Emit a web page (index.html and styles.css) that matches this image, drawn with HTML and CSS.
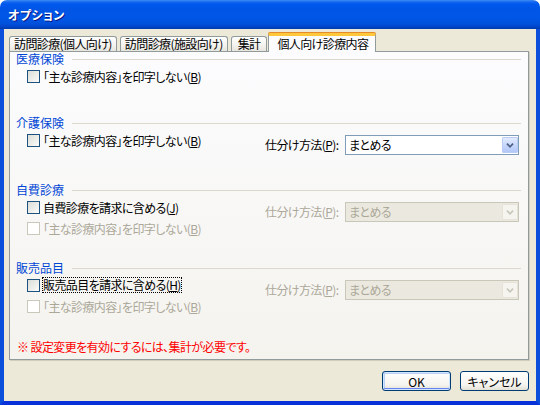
FILE: index.html
```html
<!DOCTYPE html>
<html lang="ja">
<head>
<meta charset="utf-8">
<title>オプション</title>
<link rel="stylesheet" href="styles.css">
</head>
<body>
<div class="window">
  <div class="titlebar"><span class="title">オプション</span></div>
  <div class="client">
    <div class="tabs">
      <div class="tab">訪問診療(個人向け)</div>
      <div class="tab">訪問診療(施設向け)</div>
      <div class="tab short">集計</div>
      <div class="tab active">個人向け診療内容</div>
    </div>
    <div class="panel">
      <section class="group g1">
        <div class="group-head"><span>医療保険</span></div>
        <div class="group-body">
          <div class="checks">
            <label class="check"><span class="box"></span><span>「主な診療内容」を印字しない(<u>B</u>)</span></label>
          </div>
        </div>
      </section>
      <section class="group g2">
        <div class="group-head"><span>介護保険</span></div>
        <div class="group-body">
          <div class="checks">
            <label class="check"><span class="box"></span><span>「主な診療内容」を印字しない(<u>B</u>)</span></label>
          </div>
          <span class="field-label">仕分け方法(<u>P</u>):</span>
          <div class="combo"><span class="combo-text">まとめる</span><span class="combo-btn"><svg width="16" height="16" viewBox="0 0 16 16"><path d="M4.5 6.5 L8 10 L11.5 6.5" fill="none" stroke="currentColor" stroke-width="2"/></svg></span></div>
        </div>
      </section>
      <section class="group g3">
        <div class="group-head"><span>自費診療</span></div>
        <div class="group-body">
          <div class="checks">
            <label class="check"><span class="box"></span><span>自費診療を請求に含める(<u>J</u>)</span></label>
            <label class="check disabled"><span class="box"></span><span>「主な診療内容」を印字しない(<u>B</u>)</span></label>
          </div>
          <span class="field-label disabled">仕分け方法(<u>P</u>):</span>
          <div class="combo disabled"><span class="combo-text">まとめる</span><span class="combo-btn"><svg width="16" height="16" viewBox="0 0 16 16"><path d="M4.5 6.5 L8 10 L11.5 6.5" fill="none" stroke="currentColor" stroke-width="2"/></svg></span></div>
        </div>
      </section>
      <section class="group g4">
        <div class="group-head"><span>販売品目</span></div>
        <div class="group-body">
          <div class="checks">
            <label class="check"><span class="box"></span><span class="focus">販売品目を請求に含める(<u>H</u>)</span></label>
            <label class="check disabled"><span class="box"></span><span>「主な診療内容」を印字しない(<u>B</u>)</span></label>
          </div>
          <span class="field-label disabled">仕分け方法(<u>P</u>):</span>
          <div class="combo disabled"><span class="combo-text">まとめる</span><span class="combo-btn"><svg width="16" height="16" viewBox="0 0 16 16"><path d="M4.5 6.5 L8 10 L11.5 6.5" fill="none" stroke="currentColor" stroke-width="2"/></svg></span></div>
        </div>
      </section>
      <p class="note">※ 設定変更を有効にするには、集計が必要です。</p>
    </div>
    <div class="buttons">
      <button class="btn default">OK</button>
      <button class="btn">キャンセル</button>
    </div>
  </div>
</div>
</body>
</html>
```

FILE: styles.css
```css
html, body {
  margin: 0;
  padding: 0;
}
body {
  width: 540px;
  height: 405px;
  overflow: hidden;
  background: #ffffff;
  font-family: "Noto Sans CJK JP", "Noto Sans", sans-serif;
  font-size: 12px;
  font-feature-settings: "palt";
  letter-spacing: -0.6px;
  color: #000;
}
.window {
  width: 540px;
  height: 405px;
  display: flex;
  flex-direction: column;
}
.titlebar {
  height: 29px;
  flex: none;
  box-sizing: border-box;
  border-radius: 7px 7px 0 0;
  background: linear-gradient(#3f8cf3 0, #1568f0 2px, #0058ee 4px, #0055e5 9px, #0056e6 18px, #0050da 24px, #0044c8 27px, #003aa8 29px);
  display: flex;
  align-items: center;
  padding: 0 0 1px 8px;
}
.title {
  color: #fff;
  font-weight: bold;
  font-size: 12px;
  letter-spacing: 0.5px;
  text-shadow: 1px 1px 0 #0a1883;
}
.client {
  flex: 1;
  display: flex;
  flex-direction: column;
  background: #ece9d8;
  border: 4px solid #0b4edb;
  border-top: 0;
  border-bottom-color: #0831d9;
  padding: 4px 7px 0 5px;
  min-height: 0;
}
.tabs {
  height: 18px;
  flex: none;
  display: flex;
  align-items: flex-end;
  gap: 3px;
}
.tab {
  height: 15px;
  box-sizing: border-box;
  padding: 0 4px;
  line-height: 13px;
  border: 1px solid #919b9c;
  border-bottom: 0;
  border-radius: 3px 3px 0 0;
  background: linear-gradient(#ffffff, #f3f2ee 60%, #e7e5dc);
  white-space: nowrap;
}
.tab.short {
  padding: 0 6px;
}
.tab.active {
  position: relative;
  z-index: 1;
  height: 19px;
  margin: 0 0 -1px -2px;
  padding: 0 7px 0 8px;
  line-height: 16px;
  background: #fcfcfe;
  border-top: 3px solid #ffc83c;
  box-shadow: 0 -1px 0 #e68b2c;
  border-radius: 2px 2px 0 0;
}
.panel {
  height: 309px;
  flex: none;
  box-sizing: border-box;
  border: 1px solid #919b9c;
  background: linear-gradient(#fcfcfe, #f4f3ee);
  box-shadow: 1px 1px 0 #d0cebf;
  display: grid;
  grid-template-rows: 64px 67px 78px 79px auto;
}
.group {
  display: flex;
  flex-direction: column;
}
.group-head {
  display: grid;
  grid-template-columns: 56px 1fr;
  align-items: center;
  height: 14px;
  padding: 0 7px 0 6px;
  color: #0046d5;
  line-height: 14px;
  letter-spacing: 0;
}
.group-head::after {
  content: "";
  height: 1px;
  background: #dcd9cc;
}
.group-body {
  display: grid;
  grid-template-columns: 238px 80px 174px;
  align-items: start;
  margin-top: 2px;
  padding-left: 17px;
}
.checks {
  display: flex;
  flex-direction: column;
  gap: 5px;
}
.check {
  display: flex;
  align-items: center;
  height: 16px;
  white-space: nowrap;
}
.box {
  width: 13px;
  height: 13px;
  flex: none;
  box-sizing: border-box;
  border: 1px solid #1c5180;
  background: linear-gradient(135deg, #dcdcd7, #fbfbfa);
  margin-right: 3px;
}
.check.disabled {
  color: #aca899;
}
.check.disabled .box {
  border-color: #cac8bb;
  background: #ffffff;
}
.focus {
  outline: 1px dotted #000;
  outline-offset: 0;
  line-height: 14px;
}
.field-label {
  margin-top: 3px;
  height: 20px;
  line-height: 20px;
  white-space: nowrap;
}
.field-label.disabled {
  color: #aca899;
}
.combo {
  margin-top: 3px;
  height: 20px;
  box-sizing: border-box;
  border: 1px solid #7f9db9;
  background: #ffffff;
  display: flex;
  align-items: stretch;
}
.combo-text {
  flex: 1;
  padding-left: 3px;
  line-height: 18px;
}
.combo-btn {
  width: 16px;
  margin: 1px 0;
  box-sizing: border-box;
  border: 1px solid #b9cdf5;
  border-radius: 1px;
  background: linear-gradient(#e3ebfe, #c3d4fb 60%, #b3c8f7);
  color: #4d6185;
  display: flex;
  align-items: center;
  justify-content: center;
}
.combo.disabled {
  border-color: #c9c7ba;
  background: #ebe9df;
  color: #aca899;
}
.combo.disabled .combo-btn {
  border-color: #e5e3d8;
  background: #f5f4ef;
  color: #c9c7ba;
}
.note {
  margin: 0;
  padding-left: 7px;
  height: 14px;
  line-height: 14px;
  color: #ff0000;
}
.buttons {
  display: flex;
  justify-content: flex-end;
  gap: 9px;
  margin-top: 11px;
}
.btn {
  width: 69px;
  height: 20px;
  padding: 0;
  box-sizing: border-box;
  border: 1px solid #003c74;
  border-radius: 3px;
  background: linear-gradient(#ffffff, #f5f4f0 70%, #e3e1d6);
  font-family: "Noto Sans CJK JP", "Noto Sans", sans-serif;
  font-size: 12px;
  font-feature-settings: "palt";
  color: #000;
  line-height: 17px;
}
.btn.default {
  box-shadow: inset 0 0 0 1px #cee7ff, inset 0 -1px 0 1px #6982ee, inset 1px 1px 0 1px #bccff6;
}
```
